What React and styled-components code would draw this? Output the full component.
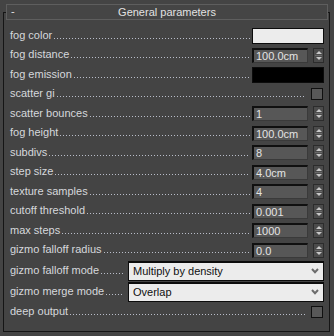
import React from 'react'
import styled, { createGlobalStyle } from 'styled-components'

const Global = createGlobalStyle`
  html, body {
    margin: 0;
    padding: 0;
    background: #444444;
    width: 334px;
    height: 336px;
    overflow: hidden;
  }
  body {
    font-family: "Liberation Sans", Arial, sans-serif;
    font-size: 11px;
    color: #dadada;
  }
`

const Panel = styled.div`
  display: flex;
  flex-direction: column;
  width: 334px;
  height: 336px;
  padding-top: 4px;
  box-sizing: border-box;
`

const RolloutHeader = styled.div`
  position: relative;
  z-index: 1;
  margin: 0 6px;
  height: 16px;
  box-sizing: border-box;
  border: 1px solid #5e5e5e;
  background: #454545;
  display: flex;
  align-items: center;
  justify-content: center;
  color: #e2e2e2;
`

const Collapse = styled.span`
  position: absolute;
  left: 4px;
  top: 0px;
  line-height: 13px;
`

const Frame = styled.div`
  margin: -8px 4px 0 3px;
  height: 320px;
  box-sizing: border-box;
  border: 1px solid #151515;
  padding: 13px 5px 0 6px;
  display: flex;
  flex-direction: column;
`

const Row = styled.div`
  display: flex;
  align-items: center;
  height: ${p => p.$h || 19.5}px;
  flex-shrink: 0;
`

const LabelGroup = styled.div`
  flex: 1;
  display: flex;
  align-items: baseline;
  margin-right: ${p => p.$gap}px;
  min-width: 0;
  margin-top: -2px;
`

const Label = styled.span`
  white-space: nowrap;
  color: #d6d8dc;
`

const Leader = styled.div`
  flex: 1;
  height: 1px;
  margin: 0 0 1px 2px;
  background-image: linear-gradient(to right, #b9bdc9 1px, transparent 1px);
  background-size: 3px 1px;
  background-repeat: repeat-x;
`

const Swatch = styled.div`
  width: 72px;
  height: 16px;
  box-sizing: border-box;
  border: 1px solid #0c0c0c;
  background: ${p => p.$color};
`

const Field = styled.div`
  width: 56px;
  height: 15px;
  box-sizing: border-box;
  background: #575757;
  border-top: 2px solid #101010;
  border-left: 2px solid #101010;
  border-right: 1px solid #3a3a3a;
  border-bottom: 1px solid #3a3a3a;
  color: #e4e4e4;
  padding-left: 2px;
  line-height: 12px;
  font-size: 11px;
`

const Spinner = styled.div`
  width: 11px;
  height: 15px;
  margin-left: 5px;
  box-sizing: border-box;
  border: 1px solid #2c2c2c;
  background: #4b4b4b;
  display: flex;
  flex-direction: column;
  align-items: center;
  justify-content: space-between;
  padding: 2px 0;
`

const Arrow = styled.div`
  width: 0;
  height: 0;
  border-left: 3px solid transparent;
  border-right: 3px solid transparent;
  ${p => (p.$down ? 'border-top: 3px solid #c8c8c8;' : 'border-bottom: 3px solid #c8c8c8;')}
`

const Divider = styled.div`
  width: 7px;
  height: 1px;
  background: #6a6a6a;
`

const Check = styled.div`
  width: 12px;
  height: 12px;
  margin-right: 1px;
  box-sizing: border-box;
  border: 1px solid #101010;
  background: #585858;
`

const Select = styled.div`
  width: 196px;
  height: 20px;
  box-sizing: border-box;
  border: 1px solid #0c0c0c;
  border-top-width: 2px;
  background: #ececec;
  color: #101010;
  display: flex;
  align-items: center;
  justify-content: space-between;
  padding: 0 4px 0 4px;
  font-size: 11px;
`

const Chevron = () => (
  <svg width="8" height="6" viewBox="0 0 8 6">
    <path d="M1 1 L4 4.2 L7 1" fill="none" stroke="#6c6c6c" strokeWidth="2" />
  </svg>
)

const NumberRow = ({ label, value }) => (
  <Row>
    <LabelGroup $gap={2}>
      <Label>{label}</Label>
      <Leader />
    </LabelGroup>
    <Field>{value}</Field>
    <Spinner>
      <Arrow />
      <Divider />
      <Arrow $down />
    </Spinner>
  </Row>
)

const SwatchRow = ({ label, color }) => (
  <Row>
    <LabelGroup $gap={2}>
      <Label>{label}</Label>
      <Leader />
    </LabelGroup>
    <Swatch $color={color} />
  </Row>
)

const CheckRow = ({ label }) => (
  <Row>
    <LabelGroup $gap={5}>
      <Label>{label}</Label>
      <Leader />
    </LabelGroup>
    <Check />
  </Row>
)

const SelectRow = ({ label, value }) => (
  <Row $h={21}>
    <LabelGroup $gap={4}>
      <Label>{label}</Label>
      <Leader />
    </LabelGroup>
    <Select>
      <span>{value}</span>
      <Chevron />
    </Select>
  </Row>
)

const numbers = [
  ['fog height', '100.0cm'],
  ['subdivs', '8'],
  ['step size', '4.0cm'],
  ['texture samples', '4'],
  ['cutoff threshold', '0.001'],
  ['max steps', '1000'],
  ['gizmo falloff radius', '0.0'],
]

export default function App() {
  return (
    <Panel>
      <Global />
      <RolloutHeader>
        <Collapse>-</Collapse>
        General parameters
      </RolloutHeader>
      <Frame>
        <SwatchRow label="fog color" color="#ececec" />
        <NumberRow label="fog distance" value="100.0cm" />
        <SwatchRow label="fog emission" color="#000000" />
        <CheckRow label="scatter gi" />
        <NumberRow label="scatter bounces" value="1" />
        {numbers.map(([l, v]) => (
          <NumberRow key={l} label={l} value={v} />
        ))}
        <SelectRow label="gizmo falloff mode" value="Multiply by density" />
        <SelectRow label="gizmo merge mode" value="Overlap" />
        <CheckRow label="deep output" />
      </Frame>
    </Panel>
  )
}
